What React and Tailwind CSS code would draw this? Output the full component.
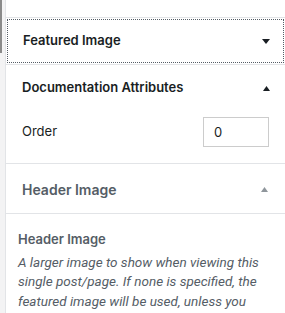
export default function App() {
  const font = { fontFamily: "Inter, 'Noto Sans', sans-serif" };

  return (
    <div className="flex h-[313px] w-[285px] overflow-hidden bg-white" style={font}>
      {/* scroll gutter */}
      <div className="flex w-[5px] shrink-0 bg-[#f3f3f4]">
        <div className="h-[53px] w-[2px] bg-[#8a8a8a]" />
      </div>

      <div className="flex min-w-0 flex-1 flex-col border-l border-[#e2e4e7]">
        <div className="h-[17px] shrink-0" />

        {/* Featured Image */}
        <div className="border-t border-[#e2e4e7]">
          <div className="m-px flex h-[44px] items-center justify-between border border-dotted border-[#555d66] pl-[15px] pr-[13px]">
            <span className="text-[13px] font-semibold text-[#191e23]">Featured Image</span>
            <svg width="8" height="5" viewBox="0 0 8 5">
              <polygon points="0,0 8,0 4,5" fill="#191e23" />
            </svg>
          </div>
        </div>

        {/* Documentation Attributes */}
        <div className="border-t border-[#e2e4e7]">
          <div className="flex h-[46px] items-center justify-between pl-4 pr-[15px]">
            <span className="text-[13px] font-semibold text-[#191e23]">Documentation Attributes</span>
            <svg width="7" height="5" viewBox="0 0 7 5">
              <polygon points="0,5 7,5 3.5,0" fill="#191e23" />
            </svg>
          </div>
          <div className="flex items-center justify-between pb-4 pl-4 pr-4 pt-[6px]">
            <span className="text-[13px] text-[#191e23]">Order</span>
            <input
              readOnly
              value="0"
              className="h-[30px] w-[66px] border border-[#cccccc] bg-white pl-[10px] text-[13px] text-[#191e23] outline-none"
            />
          </div>
        </div>

        {/* Header Image */}
        <div className="border-t border-[#e2e4e7]">
          <div className="flex h-[49px] items-center justify-between pl-4 pr-[17px] pt-[2px]">
            <span className="text-[14px] font-semibold text-[#555d66]">Header Image</span>
            <svg width="7" height="5" viewBox="0 0 7 5">
              <polygon points="0,5 7,5 3.5,0" fill="#8f969c" />
            </svg>
          </div>
          <div className="border-t border-[#e2e4e7] px-3 pt-4 text-[13px] leading-[19.5px] text-[#555d66]">
            <div className="mb-[3px] font-semibold">Header Image</div>
            <p className="font-['Roboto',sans-serif] text-[13.5px] italic">
              A larger image to show when viewing this single post/page. If none is specified, the
              featured image will be used, unless you select an image and hide it.
            </p>
          </div>
        </div>
      </div>
    </div>
  );
}
